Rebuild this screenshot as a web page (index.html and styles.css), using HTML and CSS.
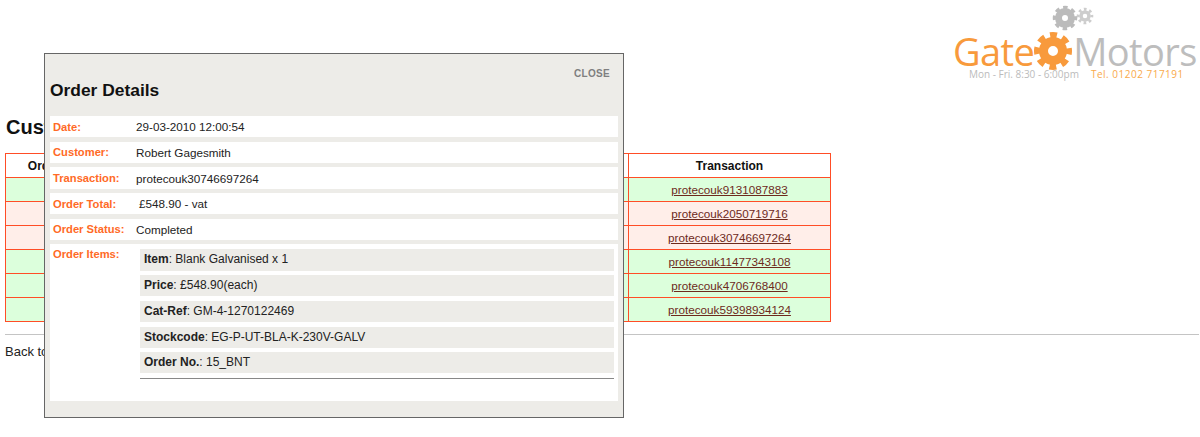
FILE: index.html
```html
<!DOCTYPE html>
<html lang="en">
<head>
    <meta charset="UTF-8">
    <link rel="stylesheet" href="styles.css">
    <title>Customer Orders</title>
</head>
<body>
    <div class="header">
        <div class="logo">
            <svg class="logo-gears" width="60" height="34" viewBox="0 0 60 34">
                <circle cx="13" cy="18" r="10.5" class="gear-big-teeth"/>
                <circle cx="13" cy="18" r="6.5" class="gear-big-body"/>
                <circle cx="33" cy="16" r="6.8" class="gear-small-teeth"/>
                <circle cx="33" cy="16" r="4" class="gear-small-body"/>
            </svg>
            <div class="logo-name">
                <span class="logo-gate">Gate</span>
                <svg class="logo-cog" width="40" height="40" viewBox="0 0 40 40">
                    <circle cx="20" cy="20" r="15" class="cog-teeth"/>
                    <circle cx="20" cy="20" r="9.5" class="cog-body"/>
                </svg>
                <span class="logo-motors">Motors</span>
            </div>
            <div class="logo-info">
                <span class="logo-hours">Mon - Fri. 8:30 - 6:00pm</span>
                <span class="logo-tel">Tel. 01202 717191</span>
            </div>
        </div>
    </div>

    <h1>Customer Orders</h1>

    <table class="orders">
        <colgroup>
            <col class="col-order">
            <col class="col-date">
            <col class="col-customer">
            <col class="col-total">
            <col class="col-status">
            <col class="col-transaction">
        </colgroup>
        <tr>
            <th>Order No.</th><th>Date</th><th>Customer</th><th>Total</th><th>Status</th><th>Transaction</th>
        </tr>
        <tr class="ok"><td></td><td></td><td></td><td></td><td></td><td><a href="#">protecouk9131087883</a></td></tr>
        <tr class="bad"><td></td><td></td><td></td><td></td><td></td><td><a href="#">protecouk2050719716</a></td></tr>
        <tr class="bad"><td></td><td></td><td></td><td></td><td></td><td><a href="#">protecouk30746697264</a></td></tr>
        <tr class="ok"><td></td><td></td><td></td><td></td><td></td><td><a href="#">protecouk11477343108</a></td></tr>
        <tr class="ok"><td></td><td></td><td></td><td></td><td></td><td><a href="#">protecouk4706768400</a></td></tr>
        <tr class="ok"><td></td><td></td><td></td><td></td><td></td><td><a href="#">protecouk59398934124</a></td></tr>
    </table>

    <div class="rule"></div>
    <p class="back">Back to orders</p>

    <div class="modal">
        <a class="close" href="#">CLOSE</a>
        <h2>Order Details</h2>
        <div class="details">
            <div class="row"><span class="label">Date:</span><span>29-03-2010 12:00:54</span></div>
            <div class="row"><span class="label">Customer:</span><span>Robert Gagesmith</span></div>
            <div class="row"><span class="label">Transaction:</span><span>protecouk30746697264</span></div>
            <div class="row"><span class="label">Order Total:</span><span class="total">£548.90 - vat</span></div>
            <div class="row"><span class="label">Order Status:</span><span>Completed</span></div>
            <div class="row row-items">
                <span class="label">Order Items:</span>
                <div class="items">
                    <div class="item"><b>Item</b>: Blank Galvanised x 1</div>
                    <div class="item"><b>Price</b>: £548.90(each)</div>
                    <div class="item"><b>Cat-Ref</b>: GM-4-1270122469</div>
                    <div class="item"><b>Stockcode</b>: EG-P-UT-BLA-K-230V-GALV</div>
                    <div class="item"><b>Order No.</b>: 15_BNT</div>
                    <div class="item-rule"></div>
                </div>
            </div>
        </div>
    </div>
</body>
</html>
```

FILE: styles.css
```css
body {
    margin: 0;
    padding: 0 0 0 5px;
    font-family: "Liberation Sans", Arial, sans-serif;
    font-size: 11.7px;
    color: #222;
    background: #fff;
}

.header {
    height: 116px;
    display: flex;
    justify-content: flex-end;
}

.logo {
    width: 246px;
    margin-right: 1px;
}

.logo-gears {
    display: block;
    margin: 0 0 0 99px;
}

.gear-big-teeth {
    fill: none;
    stroke: #bbb;
    stroke-width: 3.5;
    stroke-dasharray: 4.4 3.85;
    stroke-dashoffset: 2.2;
}

.gear-big-body {
    fill: none;
    stroke: #bbb;
    stroke-width: 7;
}

.gear-small-teeth {
    fill: none;
    stroke: #cdcdcd;
    stroke-width: 3;
    stroke-dasharray: 2.67 2.67;
    stroke-dashoffset: 1.33;
}

.gear-small-body {
    fill: none;
    stroke: #cdcdcd;
    stroke-width: 3.5;
}

.logo-name {
    display: flex;
    align-items: center;
    height: 34px;
    font-family: "Open Sans", sans-serif;
    font-size: 38px;
    line-height: 34px;
    letter-spacing: -0.6px;
}

.logo-gate {
    color: #f89a3c;
}

.logo-motors {
    color: #bdbdbd;
}

.logo-cog {
    flex: none;
    margin: 0 0 0 -1px;
}

.cog-teeth {
    fill: none;
    stroke: #f89a3c;
    stroke-width: 8;
    stroke-dasharray: 6.5 5.28;
    stroke-dashoffset: 3.25;
}

.cog-body {
    fill: none;
    stroke: #f89a3c;
    stroke-width: 9;
}

.logo-info {
    display: flex;
    font-family: "Open Sans", sans-serif;
    font-size: 10px;
    line-height: 12px;
    padding-left: 16px;
    white-space: nowrap;
}

.logo-hours {
    color: #bbb;
    margin-right: 12px;
}

.logo-tel {
    color: #f9a94a;
    letter-spacing: 0.5px;
}

h1 {
    margin: 0 0 14px;
    padding-left: 1px;
    font-size: 20px;
    line-height: 23px;
    color: #111;
}

.orders {
    width: 826px;
    table-layout: fixed;
    border-collapse: collapse;
}

.col-order { width: 100px; }
.col-date { width: 120px; }
.col-customer { width: 140px; }
.col-total { width: 130px; }
.col-status { width: 133px; }
.col-transaction { width: 202px; }

.orders th,
.orders td {
    height: 23px;
    padding: 0;
    border: 1px solid #ff4d26;
    text-align: center;
}

.orders th {
    color: #111;
    font-size: 12px;
}

.ok td {
    background: #dcffdc;
}

.bad td {
    background: #ffeee9;
}

.orders a {
    color: #6e2a1c;
}

.rule {
    height: 1px;
    margin: 12px 1px 0 0;
    background: #c4c4c4;
}

.back {
    margin: 10px 0 0;
    font-size: 13px;
    line-height: 14px;
}

.modal {
    position: absolute;
    left: 44px;
    top: 53px;
    box-sizing: border-box;
    width: 580px;
    height: 365px;
    padding: 0 5px;
    background: #edece8;
    border: 1px solid #666;
}

.close {
    position: absolute;
    right: 13px;
    top: 14px;
    font-size: 10px;
    font-weight: bold;
    letter-spacing: 0.3px;
    color: #7f7f7f;
    text-decoration: none;
}

h2 {
    margin: 0;
    padding-top: 26px;
    height: 36px;
    font-size: 17.4px;
    line-height: 20px;
    color: #111;
}

.details {
    display: flex;
    flex-direction: column;
    gap: 4.4px;
}

.row {
    display: flex;
    height: 21.3px;
    align-items: center;
    background: #fff;
}

.label {
    flex: none;
    width: 83px;
    margin-left: 3px;
    font-size: 11.2px;
    font-weight: bold;
    color: #ff6a26;
}

.total {
    padding-left: 3px;
}

.row-items {
    height: 156.5px;
    align-items: flex-start;
}

.row-items .label {
    padding-top: 3px;
    line-height: 14px;
}

.items {
    width: 474px;
    margin: 5px 0 0 4px;
    font-size: 12px;
}

.item {
    height: 21.3px;
    margin-bottom: 4.4px;
    padding-left: 4px;
    line-height: 21.3px;
    background: #edece8;
}

.item-rule {
    height: 1px;
    margin-top: 2.5px;
    background: #888;
}
```
